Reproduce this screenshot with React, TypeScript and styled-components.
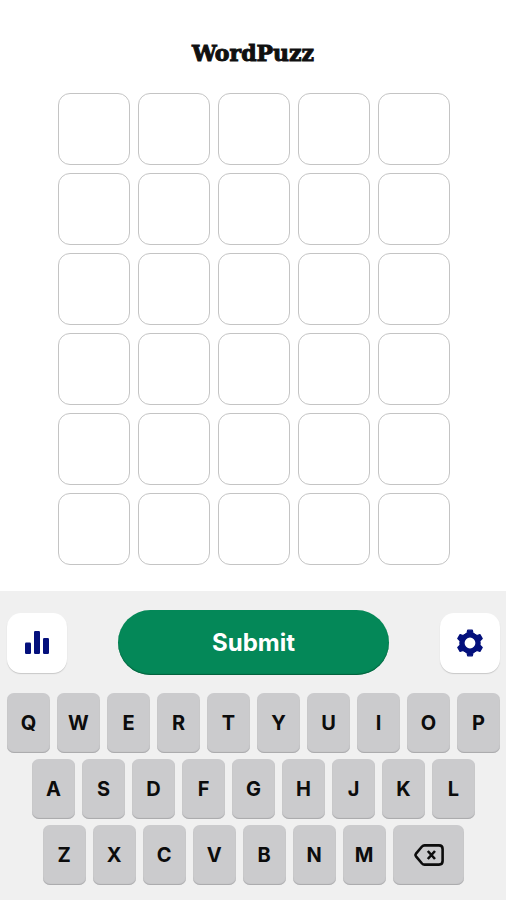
import React from "react";
import styled, { createGlobalStyle } from "styled-components";

const GlobalStyle = createGlobalStyle`
  * { box-sizing: border-box; }
  html, body { margin: 0; background: #ffffff; }
  button { border: 0; padding: 0; font: inherit; cursor: pointer; }
`;

const Page = styled.div`
  display: flex;
  flex-direction: column;
  min-height: 100vh;
  font-family: Inter, "Open Sans", sans-serif;
`;

const Header = styled.header`
  padding: 38px 16px 0;
  text-align: center;
`;

const Title = styled.h1`
  margin: 0;
  font-family: "DejaVu Serif", serif;
  font-size: 22px;
  font-weight: 700;
  line-height: 30px;
  color: #101010;
  -webkit-text-stroke: 1px #101010;
`;

const Board = styled.main`
  display: grid;
  grid-template-columns: repeat(5, 1fr);
  gap: 8px;
  padding: 25px 56px 26px 58px;
`;

const Cell = styled.div`
  aspect-ratio: 1;
  border: 1px solid #c4c4c4;
  border-radius: 12px;
`;

const Controls = styled.section`
  display: flex;
  flex: 1;
  flex-direction: column;
  gap: 18px;
  padding: 19px 6px 15px 7px;
  background: #f0f0f0;
`;

const Actions = styled.div`
  display: flex;
  align-items: center;
  justify-content: space-between;
`;

const IconButton = styled.button`
  display: flex;
  align-items: center;
  justify-content: center;
  width: 60px;
  height: 60px;
  border-radius: 14px;
  background: #ffffff;
  box-shadow: 0 1px 1px #c8c8c8;
  color: #04107c;
`;

const SubmitButton = styled.button`
  width: 55%;
  height: 65px;
  border-radius: 33px;
  background: #048858;
  box-shadow: inset 0 -1px 1px #04603c;
  color: #ffffff;
  && {
    font-size: 24px;
    font-weight: 700;
  }
`;

const Keyboard = styled.div`
  display: flex;
  flex-direction: column;
  gap: 6px;
`;

const KeyRow = styled.div`
  display: flex;
  justify-content: center;
  gap: 7px;
`;

const Key = styled.button<{ $wide?: boolean }>`
  display: flex;
  align-items: center;
  justify-content: center;
  width: ${(p) => (p.$wide ? "calc((100% - 63px) / 6)" : "calc((100% - 63px) / 10)")};
  height: 60px;
  border-radius: 7px;
  background: #cbcbcd;
  box-shadow: inset 0 -1px 1px #a9a9ab;
  color: #0c0c0c;
  && {
    font-size: 20px;
    font-weight: 700;
  }
`;

const StatsIcon = () => (
  <svg width="24" height="24" viewBox="0 0 24 24" fill="currentColor" aria-hidden="true">
    <rect x="0" y="11.5" width="6" height="11.5" rx="1.2" />
    <rect x="9" y="0" width="6" height="23" rx="1.2" />
    <rect x="18" y="7" width="6" height="16" rx="1.2" />
  </svg>
);

const GearIcon = () => (
  <svg width="28" height="28" viewBox="-14 -14 28 28" aria-hidden="true">
    <circle r="7.8" fill="none" stroke="currentColor" strokeWidth="4.8" />
    {[0, 60, 120, 180, 240, 300].map((angle) => (
      <path
        key={angle}
        d="M-5.6 -8 L-3 -9.8 L-2.3 -12.8 H2.3 L3 -9.8 L5.6 -8 Z"
        transform={`rotate(${angle})`}
        fill="currentColor"
        stroke="currentColor"
        strokeWidth="1.2"
        strokeLinejoin="round"
      />
    ))}
  </svg>
);

const BackspaceIcon = () => (
  <svg width="30" height="22" viewBox="0 0 30 22" fill="none" stroke="currentColor" strokeWidth="2.6" strokeLinejoin="round" aria-hidden="true">
    <path d="M10.5 1.4 H25 Q28.6 1.4 28.6 5 V17 Q28.6 20.6 25 20.6 H10.5 Q9 20.6 8 19.5 L2 12.3 Q1 11 2 9.7 L8 2.5 Q9 1.4 10.5 1.4 Z" />
    <path d="M13.8 7 L21 15 M21 7 L13.8 15" />
  </svg>
);

const rows = ["QWERTYUIOP", "ASDFGHJKL", "ZXCVBNM"];

export default function App() {
  return (
    <Page>
      <GlobalStyle />
      <Header>
        <Title>WordPuzz</Title>
      </Header>
      <Board aria-label="Guesses">
        {Array.from({ length: 30 }, (_, i) => (
          <Cell key={i} />
        ))}
      </Board>
      <Controls>
        <Actions>
          <IconButton type="button" aria-label="Statistics">
            <StatsIcon />
          </IconButton>
          <SubmitButton type="button">Submit</SubmitButton>
          <IconButton type="button" aria-label="Settings">
            <GearIcon />
          </IconButton>
        </Actions>
        <Keyboard>
          {rows.map((row, i) => (
            <KeyRow key={row}>
              {row.split("").map((letter) => (
                <Key key={letter} type="button">
                  {letter}
                </Key>
              ))}
              {i === 2 && (
                <Key $wide type="button" aria-label="Delete">
                  <BackspaceIcon />
                </Key>
              )}
            </KeyRow>
          ))}
        </Keyboard>
      </Controls>
    </Page>
  );
}
